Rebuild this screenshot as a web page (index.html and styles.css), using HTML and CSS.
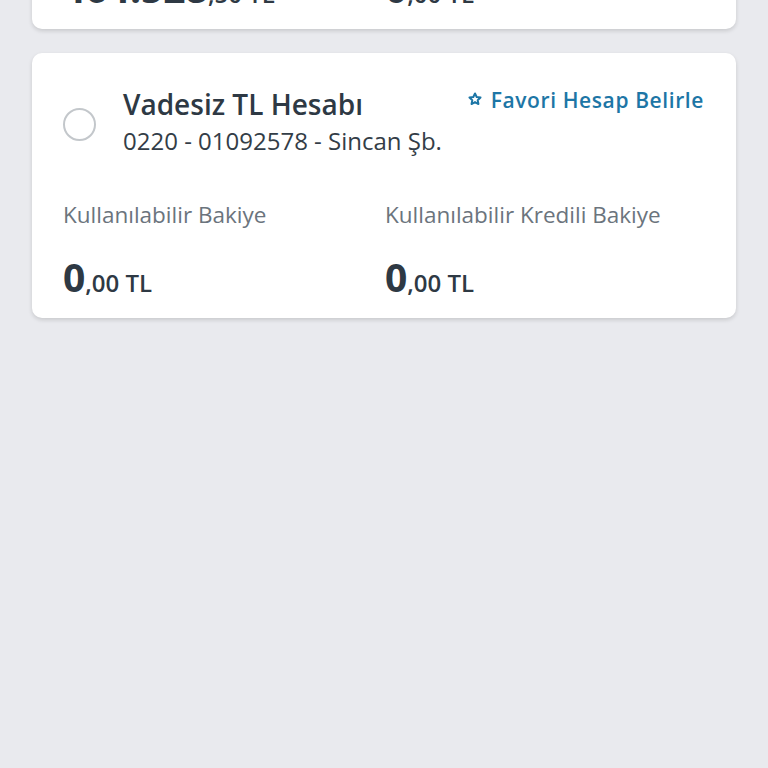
FILE: index.html
```html
<!DOCTYPE html>
<html lang="tr">
<head>
    <meta charset="UTF-8">
    <meta name="viewport" content="width=device-width, initial-scale=1.0">
    <title>Hesaplar</title>
    <link rel="stylesheet" href="styles.css">
</head>
<body>
    <div class="account-list">
        <div class="account-card">
            <div class="account-head">
                <span class="radio radio--checked"></span>
                <div class="account-info">
                    <div class="account-name">Vadesiz TL Hesabı</div>
                    <div class="account-no">0220 - 01092570 - Sincan Şb.</div>
                </div>
                <a class="fav-link" href="#">
                    <svg class="fav-icon" viewBox="0 0 24 24" width="14" height="14">
                        <path d="M12 2.5l2.9 6.1 6.6.8-4.9 4.6 1.3 6.6L12 17.3l-5.9 3.3 1.3-6.6-4.9-4.6 6.6-.8z" fill="currentColor" stroke="currentColor" stroke-width="3" stroke-linejoin="round"/>
                    </svg>
                    Favori Hesap
                </a>
            </div>
            <div class="balances">
                <div class="balance">
                    <div class="balance-label">Kullanılabilir Bakiye</div>
                    <div class="balance-amount"><span class="whole">464.528</span>,50 TL</div>
                </div>
                <div class="balance">
                    <div class="balance-label">Kullanılabilir Kredili Bakiye</div>
                    <div class="balance-amount"><span class="whole">0</span>,00 TL</div>
                </div>
            </div>
        </div>

        <div class="account-card">
            <div class="account-head">
                <span class="radio"></span>
                <div class="account-info">
                    <div class="account-name">Vadesiz TL Hesabı</div>
                    <div class="account-no">0220 - 01092578 - Sincan Şb.</div>
                </div>
                <a class="fav-link" href="#">
                    <svg class="fav-icon" viewBox="0 0 24 24" width="14" height="14">
                        <path d="M12 2.5l2.9 6.1 6.6.8-4.9 4.6 1.3 6.6L12 17.3l-5.9 3.3 1.3-6.6-4.9-4.6 6.6-.8z" fill="none" stroke="currentColor" stroke-width="3.4" stroke-linejoin="round"/>
                    </svg>
                    Favori Hesap Belirle
                </a>
            </div>
            <div class="balances">
                <div class="balance">
                    <div class="balance-label">Kullanılabilir Bakiye</div>
                    <div class="balance-amount"><span class="whole">0</span>,00 TL</div>
                </div>
                <div class="balance">
                    <div class="balance-label">Kullanılabilir Kredili Bakiye</div>
                    <div class="balance-amount"><span class="whole">0</span>,00 TL</div>
                </div>
            </div>
        </div>
    </div>
</body>
</html>
```

FILE: styles.css
```css
* {
    margin: 0;
    padding: 0;
    box-sizing: border-box;
    font-family: "Open Sans", "Noto Sans", sans-serif;
}

body {
    background-color: #e9eaee;
    min-height: 100vh;
    overflow: hidden;
}

/* list is scrolled: first card mostly above the fold */
.account-list {
    display: flex;
    flex-direction: column;
    gap: 24px;
    padding: 0 32px;
    margin-top: -236px;
}

.account-card {
    background-color: #fff;
    border-radius: 10px;
    box-shadow: 0 2px 4px rgba(0,0,0,0.14);
    padding: 33px 32px 22px 31px;
}

.account-head {
    display: flex;
    align-items: flex-start;
}

.radio {
    width: 33px;
    height: 33px;
    border: 2px solid #c3c7cb;
    border-radius: 50%;
    margin-top: 22px;
    margin-right: 27px;
    flex-shrink: 0;
}

.radio--checked {
    border: 9px solid #1d76a6;
}

.account-info {
    flex: 1;
}

.account-name {
    font-size: 28px;
    font-weight: 600;
    color: #2e3944;
    line-height: 36px;
}

.account-no {
    font-size: 24px;
    color: #333d47;
    line-height: 37px;
}

.fav-link {
    display: flex;
    align-items: center;
    gap: 9px;
    color: #1d76a6;
    font-size: 21px;
    font-weight: 600;
    letter-spacing: 0.6px;
    text-decoration: none;
    line-height: 28px;
}

.fav-icon {
    margin-top: -2px;
}

.balances {
    display: grid;
    grid-template-columns: 322px 1fr;
    margin-top: 41px;
}

.balance-label {
    font-size: 22.5px;
    color: #6b747d;
    line-height: 30px;
}

.balance-amount {
    margin-top: 27px;
    font-size: 24px;
    font-weight: 600;
    color: #2e3944;
    line-height: 1;
}

.whole {
    font-size: 39px;
    font-weight: 700;
    line-height: 1;
}
```
